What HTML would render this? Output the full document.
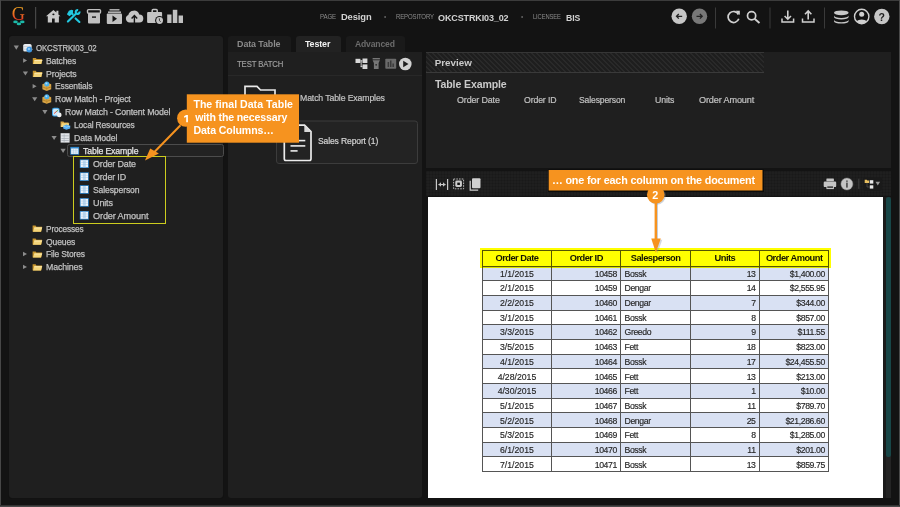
<!DOCTYPE html>
<html><head><meta charset="utf-8">
<style>
*{margin:0;padding:0;box-sizing:border-box}
html,body{width:900px;height:507px;overflow:hidden;background:#131313;font-family:"Liberation Sans",sans-serif}
.a{position:absolute}
.t{position:absolute;white-space:nowrap;line-height:1}
svg{position:absolute;overflow:visible}
</style></head>
<body>
<!-- frame -->
<div class="a" style="left:0;top:0;width:900px;height:1px;background:#3c3c3c"></div>
<div class="a" style="left:0;top:0;width:1px;height:507px;background:#474747"></div>
<div class="a" style="left:899px;top:0;width:1px;height:507px;background:#4a4a4a"></div>
<div class="a" style="left:0;top:505px;width:900px;height:1px;background:#333333"></div>
<div class="a" style="left:0;top:506px;width:900px;height:1px;background:#4a4a4a"></div>

<!-- LEFT PANEL -->
<div class="a" style="left:9px;top:36px;width:214px;height:461.5px;background:#1f1f1f;border-radius:3px;box-shadow:0 0 1px #0a0a0a"></div>

<!-- MIDDLE PANEL -->
<div class="a" style="left:228px;top:36px;width:63px;height:17px;background:#1a1a1a;border-radius:3px 3px 0 0"></div>
<div class="a" style="left:295.5px;top:36px;width:45px;height:17px;background:#222222;border-radius:3px 3px 0 0"></div>
<div class="a" style="left:345.5px;top:36px;width:59px;height:17px;background:#1a1a1a;border-radius:3px 3px 0 0"></div>
<div class="a" style="left:227.5px;top:52px;width:194.5px;height:445.5px;background:#1f1f1f;border-radius:0 0 3px 3px"></div>
<div class="a" style="left:227.5px;top:74.5px;width:194.5px;height:1px;background:#282828"></div>

<!-- PREVIEW top -->
<div class="a" style="left:426px;top:52px;width:465px;height:116px;background:#1f1f1f"></div>
<div class="a" style="left:426px;top:52px;width:338px;height:20px;background:repeating-linear-gradient(45deg,#292929 0 1.4px,#1e1e1e 1.4px 3.5px);border-top:1px solid #363636"></div>
<div class="a" style="left:426px;top:72px;width:338px;height:1px;background:#3a3a3a"></div>

<!-- PREVIEW bottom toolbar -->
<div class="a" style="left:426px;top:171px;width:465px;height:25px;background-color:#1f1f1f;background-image:linear-gradient(90deg,rgba(0,0,0,.09) 1px,transparent 1px),linear-gradient(rgba(0,0,0,.09) 1px,transparent 1px);background-size:3px 3px"></div>
<div class="a" style="left:428px;top:197px;width:455px;height:300.5px;background:#ffffff"></div>
<div class="a" style="left:883px;top:197px;width:8px;height:300.5px;background:#1b1b1b"></div>
<div class="a" style="left:885.6px;top:197px;width:5.2px;height:300.5px;background:#242424"></div>
<div class="a" style="left:885.6px;top:197px;width:5.2px;height:259.5px;background:#184647;border-radius:2.5px 2.5px 2px 2px"></div>

<!-- tree highlight boxes -->
<div class="a" style="left:67.4px;top:144.4px;width:156.6px;height:12.6px;border:1px solid #4c4c4c;border-radius:2.5px;background:#222222"></div>
<div class="a" style="left:73.2px;top:156px;width:92.5px;height:67.8px;border:1.5px solid #cccc1e"></div>

<!-- ICONS -->
<svg class="a" style="left:0;top:0" width="900" height="507" viewBox="0 0 900 507">
 <!-- logo G -->
 <defs>
  <linearGradient id="gG" x1="0" y1="0" x2="0" y2="1"><stop offset="0.15" stop-color="#f4a822"/><stop offset="0.9" stop-color="#e22a22"/></linearGradient>
 </defs>
 <!-- top separator -->
 <text x="11.8" y="19.8" font-family="Liberation Serif" font-size="18.3" fill="url(#gG)">G</text>
 <rect x="35" y="7" width="1.2" height="21.6" fill="#464646"/>
 <!-- logo dots -->
 <g fill="#1cb8a8">
  <ellipse cx="15.5" cy="21.9" rx="2.3" ry="1.3"/><ellipse cx="22.3" cy="21.9" rx="2.3" ry="1.3"/>
  <ellipse cx="18.9" cy="23.9" rx="2.3" ry="1.3"/>
 </g>
 <!-- home -->
 <path fill="#c8c8c8" d="M53.4 9.9 L46 16.3 L47.8 16.3 L47.8 22.6 L52 22.6 L52 18.4 L54.7 18.4 L54.7 22.6 L58.9 22.6 L58.9 16.3 L60.5 16.3 L58.4 14.4 L58.4 10.7 L56.4 10.7 L56.4 12.6 Z"/>
 <ellipse cx="53.4" cy="14.3" rx="1.1" ry="0.9" fill="#131313"/>
 <!-- tools -->
 <g stroke="#22c8e0" stroke-width="2.1" fill="none" stroke-linecap="round">
  <path d="M67.9 21.6 L75.6 13.9"/>
  <path d="M75.6 18.4 L79.4 22"/>
  <path d="M79.44 11.51 A1.9 1.9 0 1 1 78.09 10.17" stroke-linecap="butt"/>
 </g>
 <path fill="#22c8e0" d="M66.9 14.3 L68.9 10.7 L71.3 9.7 L73.2 10.3 L72.9 12.9 L74 14 L72.6 15.4 L71.4 14.4 L69.7 16.3 L68.1 15.3 Z"/>
 <!-- archive -->
 <rect x="87.5" y="9.6" width="13" height="3.6" rx="1" fill="none" stroke="#c0c0c0" stroke-width="1.4"/>
 <rect x="88" y="13.2" width="12" height="10.3" rx="1" fill="#c0c0c0"/>
 <rect x="92" y="16.4" width="4" height="1.4" fill="#131313"/>
 <!-- play box -->
 <rect x="109.5" y="9" width="10" height="1.6" fill="#a8a8a8"/>
 <rect x="108" y="11.4" width="13" height="1.6" fill="#b0b0b0"/>
 <rect x="106.8" y="13.6" width="15.2" height="10.4" rx="1" fill="#c0c0c0"/>
 <path d="M112.5 15.5 L117 18.8 L112.5 22 Z" fill="#131313"/>
 <!-- cloud -->
 <path fill="#c4c4c4" d="M129.6 22.6 A3.9 3.9 0 0 1 128.3 15.1 A5.7 5.7 0 0 1 139.3 14.6 A4 4 0 0 1 139.3 22.6 Z"/>
 <path d="M134.4 23.5 L134.4 15.8 M131.6 18.5 L134.4 15.6 L137.2 18.5" stroke="#131313" stroke-width="1.4" fill="none"/>
 <!-- briefcase -->
 <path fill="none" stroke="#c4c4c4" stroke-width="1.5" d="M152.2 12.2 L152.2 10.6 Q152.2 9.6 153.2 9.6 L156.2 9.6 Q157.2 9.6 157.2 10.6 L157.2 12.2"/>
 <rect x="147.1" y="12.1" width="15" height="10.9" rx="1" fill="#c4c4c4"/>
 <circle cx="159.6" cy="20.5" r="4.5" fill="#131313"/>
 <circle cx="159.6" cy="20.5" r="3.4" fill="#c4c4c4"/>
 <path d="M159.3 18.4 L159.5 20.6 L160.6 21.8" stroke="#131313" stroke-width="0.8" fill="none"/>
 <!-- bars -->
 <rect x="167.2" y="14.5" width="4.3" height="8.5" fill="#c0c0c0"/>
 <rect x="172.8" y="9.8" width="4.5" height="13.2" fill="#c0c0c0"/>
 <rect x="178.6" y="15.5" width="4.4" height="7.5" fill="#c0c0c0"/>

 <!-- center dots -->
 <circle cx="385.1" cy="17" r="0.8" fill="#9a9a9a"/>
 <circle cx="522.1" cy="17" r="0.8" fill="#9a9a9a"/>

 <!-- right icons -->
 <circle cx="679.2" cy="16.3" r="7.7" fill="#c6c6c6"/>
 <path d="M682.2 16.3 L676.5 16.3 M678.8 14 L676.5 16.3 L678.8 18.6" stroke="#222" stroke-width="1.3" fill="none"/>
 <circle cx="699.5" cy="16.3" r="7.7" fill="#787878"/>
 <path d="M696.5 16.3 L702.2 16.3 M699.9 14 L702.2 16.3 L699.9 18.6" stroke="#222" stroke-width="1.3" fill="none"/>
 <rect x="715" y="7.5" width="1" height="21" fill="#3a3a3a"/>
 <path d="M738.5 14.5 A5.5 5.5 0 1 0 738.8 18.8" stroke="#d0d0d0" stroke-width="1.7" fill="none"/>
 <path d="M735.5 10.8 L739.8 10.8 L739.8 15 Z" fill="#d0d0d0"/>
 <circle cx="751.6" cy="15.8" r="4.1" stroke="#d0d0d0" stroke-width="1.7" fill="none"/>
 <path d="M754.6 18.8 L759.5 23" stroke="#d0d0d0" stroke-width="1.9"/>
 <rect x="769.5" y="7.5" width="1" height="21" fill="#3a3a3a"/>
 <path d="M782 18.5 L782 22 L793.6 22 L793.6 18.5" stroke="#d0d0d0" stroke-width="1.5" fill="none"/>
 <path d="M787.8 10.5 L787.8 19 M784.6 16 L787.8 19.2 L791 16" stroke="#d0d0d0" stroke-width="1.6" fill="none"/>
 <path d="M802.5 18.5 L802.5 22 L814 22 L814 18.5" stroke="#d0d0d0" stroke-width="1.5" fill="none"/>
 <path d="M808.2 19.5 L808.2 11 M805 14.2 L808.2 11 L811.4 14.2" stroke="#d0d0d0" stroke-width="1.6" fill="none"/>
 <rect x="824" y="7.5" width="1" height="21" fill="#3a3a3a"/>
 <ellipse cx="841.3" cy="12.8" rx="7.3" ry="2.4" fill="#c8c8c8"/>
 <path d="M834 15.5 A7.3 2.4 0 0 0 848.6 15.5 L848.6 17 A7.3 2.4 0 0 1 834 17 Z" fill="#c8c8c8"/>
 <path d="M834 19.8 A7.3 2.4 0 0 0 848.6 19.8 L848.6 21.2 A7.3 2.4 0 0 1 834 21.2 Z" fill="#c8c8c8"/>
 <circle cx="861.7" cy="16.5" r="7.2" fill="none" stroke="#d0d0d0" stroke-width="1.4"/>
 <circle cx="861.7" cy="14.2" r="2.5" fill="#d0d0d0"/>
 <path d="M856.4 21.3 A6.5 4.5 0 0 1 867 21.3 A7 7 0 0 1 856.4 21.3Z" fill="#d0d0d0"/>
 <circle cx="881.8" cy="16.5" r="7.7" fill="#c6c6c6"/>

<path d="M13.70 45.60 L18.90 45.60 L16.30 49.70 Z" fill="#8c8c8c"/>
<g transform="translate(22.80 43.40)"><rect x="0.4" y="0.6" width="8.4" height="7.6" rx="1.6" fill="#e8ecf0"/><path d="M0.4 3.2 L8.8 3.2 M0.4 5.8 L8.8 5.8" stroke="#b8bec6" stroke-width="0.6"/><circle cx="6.5" cy="6.2" r="2.9" fill="#3c96e0"/><circle cx="6.1" cy="5.6" r="1.2" fill="#8cc8f8"/><path d="M8.9 4.8 L10 5.8 L8.9 6.8" fill="#a0a0a0"/></g>
<path d="M23.10 58.30 L27.10 60.50 L23.10 62.70 Z" fill="#8c8c8c"/>
<g transform="translate(32.80 56.90)"><path d="M0 1 L0 7.2 L8.6 7.2 L9.4 2.2 L3.8 2.2 L3 1 Z" fill="#c8962e"/><path d="M0.4 7.2 L1.8 3 L9.6 3 L8.4 7.2 Z" fill="#f4d57a"/><path d="M1.8 3 L9.6 3 L9.3 4 L1.5 4 Z" fill="#fbe9b0"/></g>
<path d="M22.80 71.40 L28.00 71.40 L25.40 75.50 Z" fill="#8c8c8c"/>
<g transform="translate(32.80 69.80)"><path d="M0 1 L0 7.2 L8.6 7.2 L9.4 2.2 L3.8 2.2 L3 1 Z" fill="#c8962e"/><path d="M0.4 7.2 L1.8 3 L9.6 3 L8.4 7.2 Z" fill="#f4d57a"/><path d="M1.8 3 L9.6 3 L9.3 4 L1.5 4 Z" fill="#fbe9b0"/></g>
<path d="M32.60 84.10 L36.60 86.30 L32.60 88.50 Z" fill="#8c8c8c"/>
<g transform="translate(42.20 81.30)"><path d="M0.2 3 L4.5 1.2 L9 3 L9 8 L4.5 9.6 L0.2 8 Z" fill="#d9a547"/><path d="M0.2 5.6 L4.5 7.2 L9 5.6" fill="none" stroke="#a8781e" stroke-width="0.7"/><path d="M4.5 4.6 L4.5 9.6" stroke="#b88628" stroke-width="0.6"/><circle cx="4.6" cy="2.6" r="2.5" fill="#4ab0ea"/><circle cx="4.2" cy="2.1" r="1" fill="#a8dcff"/></g>
<path d="M32.10 97.20 L37.30 97.20 L34.70 101.30 Z" fill="#8c8c8c"/>
<g transform="translate(42.20 94.20)"><path d="M0.2 3 L4.5 1.2 L9 3 L9 8 L4.5 9.6 L0.2 8 Z" fill="#d9a547"/><path d="M0.2 5.6 L4.5 7.2 L9 5.6" fill="none" stroke="#a8781e" stroke-width="0.7"/><path d="M4.5 4.6 L4.5 9.6" stroke="#b88628" stroke-width="0.6"/><circle cx="4.6" cy="2.6" r="2.5" fill="#4ab0ea"/><circle cx="4.2" cy="2.1" r="1" fill="#a8dcff"/></g>
<path d="M42.30 110.10 L47.50 110.10 L44.90 114.20 Z" fill="#8c8c8c"/>
<g transform="translate(51.70 107.50)"><rect x="0.3" y="0.3" width="7.6" height="8.6" rx="2" fill="#3aa0e4"/><rect x="1.2" y="1.2" width="6" height="6.8" rx="1.5" fill="#cfe8fa"/><path d="M2.4 6 L5.2 3.6" stroke="#e04a3a" stroke-width="1"/><path d="M5 3.8 L6.4 2.8" stroke="#4ab04a" stroke-width="1"/><circle cx="7.6" cy="7.4" r="2.3" fill="#f0f0f0"/></g>
<g transform="translate(60.60 120.40)"><path d="M0 1 L0 6.6 L8 6.6 L8 2 L3.6 2 L2.8 1 Z" fill="#d8a848"/><path d="M0.3 6.6 L1.4 2.8 L8.6 2.8 L7.8 6.6 Z" fill="#f4d57a"/><path d="M5.8 4.2 L9.6 5.6 L9.6 8.2 L5.8 9.4 L2.6 8.2 L2.6 5.6 Z" fill="#56aff0"/><path d="M2.6 5.6 L5.8 6.8 L9.6 5.6" fill="none" stroke="#a8d8fa" stroke-width="0.7"/></g>
<path d="M51.50 135.90 L56.70 135.90 L54.10 140.00 Z" fill="#8c8c8c"/>
<g transform="translate(60.60 133.20)"><rect x="0" y="0" width="9" height="9.4" fill="#e2e4e8"/><rect x="0.8" y="2.4" width="7.4" height="0.6" fill="#9aa0a8"/><rect x="0.8" y="4.8" width="7.4" height="0.6" fill="#9aa0a8"/><rect x="0.8" y="7.2" width="7.4" height="0.6" fill="#9aa0a8"/><rect x="3.2" y="1" width="0.6" height="7.8" fill="#a8aeb6"/></g>
<path d="M60.50 148.80 L65.70 148.80 L63.10 152.90 Z" fill="#8c8c8c"/>
<g transform="translate(70.30 146.90)"><rect x="0" y="0" width="8.8" height="7.8" fill="#2e86cc"/><rect x="0.8" y="1.6" width="7.2" height="5.4" fill="#eef4fa"/><path d="M0.8 3.4 H8 M0.8 5.2 H8 M3.2 1.6 V7 M5.6 1.6 V7" stroke="#9cc4e4" stroke-width="0.5"/></g>
<g transform="translate(79.80 159.40)"><rect x="0" y="0" width="9" height="8.6" fill="#2e86cc"/><rect x="0.8" y="0.8" width="7.4" height="7" fill="#f2f6fa"/><rect x="3" y="0.8" width="3" height="7" fill="#bcd8f0"/><path d="M0.8 3 H8.2 M0.8 5.2 H8.2" stroke="#9cc4e4" stroke-width="0.5"/></g>
<g transform="translate(79.80 172.30)"><rect x="0" y="0" width="9" height="8.6" fill="#2e86cc"/><rect x="0.8" y="0.8" width="7.4" height="7" fill="#f2f6fa"/><rect x="3" y="0.8" width="3" height="7" fill="#bcd8f0"/><path d="M0.8 3 H8.2 M0.8 5.2 H8.2" stroke="#9cc4e4" stroke-width="0.5"/></g>
<g transform="translate(79.80 185.20)"><rect x="0" y="0" width="9" height="8.6" fill="#2e86cc"/><rect x="0.8" y="0.8" width="7.4" height="7" fill="#f2f6fa"/><rect x="3" y="0.8" width="3" height="7" fill="#bcd8f0"/><path d="M0.8 3 H8.2 M0.8 5.2 H8.2" stroke="#9cc4e4" stroke-width="0.5"/></g>
<g transform="translate(79.80 198.10)"><rect x="0" y="0" width="9" height="8.6" fill="#2e86cc"/><rect x="0.8" y="0.8" width="7.4" height="7" fill="#f2f6fa"/><rect x="3" y="0.8" width="3" height="7" fill="#bcd8f0"/><path d="M0.8 3 H8.2 M0.8 5.2 H8.2" stroke="#9cc4e4" stroke-width="0.5"/></g>
<g transform="translate(79.80 211.00)"><rect x="0" y="0" width="9" height="8.6" fill="#2e86cc"/><rect x="0.8" y="0.8" width="7.4" height="7" fill="#f2f6fa"/><rect x="3" y="0.8" width="3" height="7" fill="#bcd8f0"/><path d="M0.8 3 H8.2 M0.8 5.2 H8.2" stroke="#9cc4e4" stroke-width="0.5"/></g>
<g transform="translate(32.60 224.60)"><path d="M0 1 L0 7.2 L8.6 7.2 L9.4 2.2 L3.8 2.2 L3 1 Z" fill="#c8962e"/><path d="M0.4 7.2 L1.8 3 L9.6 3 L8.4 7.2 Z" fill="#f4d57a"/><path d="M1.8 3 L9.6 3 L9.3 4 L1.5 4 Z" fill="#fbe9b0"/></g>
<g transform="translate(32.60 237.50)"><path d="M0 1 L0 7.2 L8.6 7.2 L9.4 2.2 L3.8 2.2 L3 1 Z" fill="#c8962e"/><path d="M0.4 7.2 L1.8 3 L9.6 3 L8.4 7.2 Z" fill="#f4d57a"/><path d="M1.8 3 L9.6 3 L9.3 4 L1.5 4 Z" fill="#fbe9b0"/></g>
<g transform="translate(32.60 250.40)"><path d="M0 1 L0 7.2 L8.6 7.2 L9.4 2.2 L3.8 2.2 L3 1 Z" fill="#c8962e"/><path d="M0.4 7.2 L1.8 3 L9.6 3 L8.4 7.2 Z" fill="#f4d57a"/><path d="M1.8 3 L9.6 3 L9.3 4 L1.5 4 Z" fill="#fbe9b0"/></g>
<g transform="translate(32.60 263.30)"><path d="M0 1 L0 7.2 L8.6 7.2 L9.4 2.2 L3.8 2.2 L3 1 Z" fill="#c8962e"/><path d="M0.4 7.2 L1.8 3 L9.6 3 L8.4 7.2 Z" fill="#f4d57a"/><path d="M1.8 3 L9.6 3 L9.3 4 L1.5 4 Z" fill="#fbe9b0"/></g>
<path d="M23.00 251.80 L27.00 254.00 L23.00 256.20 Z" fill="#8c8c8c"/>
<path d="M23.00 264.70 L27.00 266.90 L23.00 269.10 Z" fill="#8c8c8c"/>

 <!-- middle toolbar icons -->
 <g fill="#d8d8d8">
  <rect x="355.5" y="58.8" width="4.9" height="4.2"/>
  <rect x="362.5" y="58.5" width="4.9" height="4.5"/>
  <rect x="362.5" y="64.4" width="4.9" height="4.6"/>
  <rect x="360.4" y="60.4" width="2.1" height="0.9"/>
  <rect x="360.7" y="60.4" width="0.9" height="6.7"/>
  <rect x="360.7" y="66.2" width="1.8" height="0.9"/>
 </g>
 <g fill="#777">
  <rect x="372.6" y="58" width="7.3" height="1.4"/>
  <path d="M372.6 60.2 L379.9 60.2 L378.6 63 L378.6 69 L373.9 69 L373.9 63 Z"/>
 </g>
 <rect x="375.4" y="64" width="1.6" height="1.6" fill="#333"/>
 <rect x="385.3" y="58.7" width="10.9" height="10.1" rx="0.8" fill="#6a6a6a"/>
 <g fill="#3a3a3a"><rect x="387.6" y="62" width="1.5" height="5"/><rect x="390" y="60.5" width="1.5" height="6.5"/><rect x="392.4" y="63.5" width="1.5" height="3.5"/></g>
 <circle cx="405.3" cy="64" r="6.3" fill="#d2d2d2"/>
 <path d="M403.2 60.8 L408.5 64 L403.2 67.2 Z" fill="#1f1f1f"/>

 <!-- folder outline icon -->
 <path d="M245 110 L245 86.3 L257 86.3 L260.5 90 L275 90 L275 110" fill="none" stroke="#e8e8e8" stroke-width="1.7"/>

 <!-- card -->
 <rect x="276.5" y="121" width="141" height="42.5" rx="2.5" fill="#232323" stroke="#3c3c3c" stroke-width="1"/>
 <path d="M284.3 125.2 L304.5 125.2 L311 131.7 L311 158.8 Q311 160.5 309.3 160.5 L286 160.5 Q284.3 160.5 284.3 158.8 Z" fill="none" stroke="#ececec" stroke-width="1.7"/>
 <path d="M304.3 125.2 L311 131.9 L304.3 131.9 Z" fill="#d8d8d8"/>
 <g stroke="#ececec" stroke-width="1.6"><path d="M290.5 140.6 L305.3 140.6"/><path d="M290.5 145.9 L305.3 145.9"/><path d="M290.5 150.9 L297.6 150.9"/></g>

 <!-- preview toolbar icons -->
 <g fill="#c8c8c8">
  <rect x="435.8" y="179" width="1.2" height="11"/>
  <rect x="447" y="179" width="1.2" height="11"/>
  <rect x="438.5" y="184" width="7" height="1.1"/>
  <path d="M438.5 184.55 L441 182.3 L441 186.8 Z"/>
  <path d="M445.5 184.55 L443 182.3 L443 186.8 Z"/>
 </g>
 <rect x="453.6" y="179" width="10" height="9.8" fill="none" stroke="#b8b8b8" stroke-width="1" stroke-dasharray="1.6 1.1"/>
 <rect x="455.3" y="180.6" width="6.6" height="6.4" rx="1.4" fill="#cccccc"/>
 <rect x="457.3" y="182.6" width="2.6" height="2.4" fill="#111"/>
 <rect x="472" y="178.3" width="8.5" height="10" rx="1" fill="#cfcfcf"/>
 <path d="M470.2 180.8 L470.2 190.2 L478.2 190.2" fill="none" stroke="#cfcfcf" stroke-width="1.2"/>
 <!-- print -->
 <g fill="#c4c4c4">
  <rect x="826.4" y="178.6" width="7.5" height="2.6" rx="0.5"/>
  <rect x="823.7" y="181.5" width="12.5" height="5.6" rx="1.2"/>
  <rect x="826.4" y="186" width="7.5" height="3.1"/>
 </g>
 <rect x="827.3" y="186.4" width="5.7" height="1.4" fill="#2a2a2a"/>
 <circle cx="846.9" cy="184" r="6" fill="#c4c4c4" stroke="#8a8a8a" stroke-width="0.5"/>
 <rect x="846.3" y="182.6" width="1.3" height="5" fill="#2a2a2a"/>
 <rect x="846.3" y="180.5" width="1.3" height="1.3" fill="#2a2a2a"/>
 <rect x="858.4" y="178.7" width="0.9" height="10.2" fill="#444"/>
 <rect x="863" y="177.2" width="19" height="13.6" rx="2" fill="#1a1a1a"/>
 <path d="M864.7 179.7 L866.8 179.7 L867.4 180.4 L869.1 180.4 L869.1 182.9 L864.7 182.9 Z" fill="#e8c060"/>
 <rect x="869.8" y="180.2" width="3.5" height="3.4" fill="#eaeaea"/>
 <rect x="869.8" y="185.3" width="3.5" height="3.3" fill="#eaeaea"/>
 <path d="M867 183 L867 187 L869.8 187" stroke="#5a5a5a" stroke-width="0.6" fill="none"/>
 <path d="M875.5 181.8 L880.1 181.8 L877.8 185.4 Z" fill="#9a9a9a"/>

<!--TABLESVG-->

 <!-- callout arrows -->
 <g z-index="5">
 </g>
</svg>

<div class="a" style="left:482.3px;top:250.6px;width:346.6px;height:15.4px;background:#ffffff"></div>
<div class="a" style="left:482.30px;top:266.00px;width:346.60px;height:14.69px;background:#d9e1f3"></div>
<div class="a" style="left:482.30px;top:280.69px;width:346.60px;height:14.69px;background:#ffffff"></div>
<div class="a" style="left:482.30px;top:295.37px;width:346.60px;height:14.69px;background:#d9e1f3"></div>
<div class="a" style="left:482.30px;top:310.06px;width:346.60px;height:14.69px;background:#ffffff"></div>
<div class="a" style="left:482.30px;top:324.74px;width:346.60px;height:14.69px;background:#d9e1f3"></div>
<div class="a" style="left:482.30px;top:339.43px;width:346.60px;height:14.69px;background:#ffffff"></div>
<div class="a" style="left:482.30px;top:354.12px;width:346.60px;height:14.69px;background:#d9e1f3"></div>
<div class="a" style="left:482.30px;top:368.80px;width:346.60px;height:14.69px;background:#ffffff"></div>
<div class="a" style="left:482.30px;top:383.49px;width:346.60px;height:14.69px;background:#d9e1f3"></div>
<div class="a" style="left:482.30px;top:398.17px;width:346.60px;height:14.69px;background:#ffffff"></div>
<div class="a" style="left:482.30px;top:412.86px;width:346.60px;height:14.69px;background:#d9e1f3"></div>
<div class="a" style="left:482.30px;top:427.55px;width:346.60px;height:14.69px;background:#ffffff"></div>
<div class="a" style="left:482.30px;top:442.23px;width:346.60px;height:14.69px;background:#d9e1f3"></div>
<div class="a" style="left:482.30px;top:456.92px;width:346.60px;height:14.69px;background:#ffffff"></div>
<div class="a" style="left:481.80px;top:250.10px;width:1px;height:222.00px;background:#555555"></div>
<div class="a" style="left:551.12px;top:250.10px;width:1px;height:222.00px;background:#555555"></div>
<div class="a" style="left:620.44px;top:250.10px;width:1px;height:222.00px;background:#555555"></div>
<div class="a" style="left:689.76px;top:250.10px;width:1px;height:222.00px;background:#555555"></div>
<div class="a" style="left:759.08px;top:250.10px;width:1px;height:222.00px;background:#555555"></div>
<div class="a" style="left:828.40px;top:250.10px;width:1px;height:222.00px;background:#555555"></div>
<div class="a" style="left:481.80px;top:250.10px;width:347.60px;height:1px;background:#555555"></div>
<div class="a" style="left:481.80px;top:265.50px;width:347.60px;height:1px;background:#555555"></div>
<div class="a" style="left:481.80px;top:280.19px;width:347.60px;height:1px;background:#555555"></div>
<div class="a" style="left:481.80px;top:294.87px;width:347.60px;height:1px;background:#555555"></div>
<div class="a" style="left:481.80px;top:309.56px;width:347.60px;height:1px;background:#555555"></div>
<div class="a" style="left:481.80px;top:324.24px;width:347.60px;height:1px;background:#555555"></div>
<div class="a" style="left:481.80px;top:338.93px;width:347.60px;height:1px;background:#555555"></div>
<div class="a" style="left:481.80px;top:353.62px;width:347.60px;height:1px;background:#555555"></div>
<div class="a" style="left:481.80px;top:368.30px;width:347.60px;height:1px;background:#555555"></div>
<div class="a" style="left:481.80px;top:382.99px;width:347.60px;height:1px;background:#555555"></div>
<div class="a" style="left:481.80px;top:397.67px;width:347.60px;height:1px;background:#555555"></div>
<div class="a" style="left:481.80px;top:412.36px;width:347.60px;height:1px;background:#555555"></div>
<div class="a" style="left:481.80px;top:427.05px;width:347.60px;height:1px;background:#555555"></div>
<div class="a" style="left:481.80px;top:441.73px;width:347.60px;height:1px;background:#555555"></div>
<div class="a" style="left:481.80px;top:456.42px;width:347.60px;height:1px;background:#555555"></div>
<div class="a" style="left:481.80px;top:471.10px;width:347.60px;height:1px;background:#555555"></div>
<div class="t tc" style="left:482.30px;width:69.32px;top:254.49px;font-size:9.30px;font-weight:bold;color:#141414;text-align:center;letter-spacing:-0.5px">Order Date</div>
<div class="t tc" style="left:551.62px;width:69.32px;top:254.49px;font-size:9.30px;font-weight:bold;color:#141414;text-align:center;letter-spacing:-0.5px">Order ID</div>
<div class="t tc" style="left:620.94px;width:69.32px;top:254.49px;font-size:9.30px;font-weight:bold;color:#141414;text-align:center;letter-spacing:-0.5px">Salesperson</div>
<div class="t tc" style="left:690.26px;width:69.32px;top:254.49px;font-size:9.30px;font-weight:bold;color:#141414;text-align:center;letter-spacing:-0.5px">Units</div>
<div class="t tc" style="left:759.58px;width:69.32px;top:254.49px;font-size:9.30px;font-weight:bold;color:#141414;text-align:center;letter-spacing:-0.5px">Order Amount</div>
<div class="t" style="left:482.30px;width:69.32px;text-align:center;top:269.71px;font-size:8.70px;color:#262626;letter-spacing:0.00px;-webkit-text-stroke:0.15px #262626">1/1/2015</div>
<div class="t" style="left:551.62px;width:65.32px;text-align:right;top:269.71px;font-size:8.70px;color:#262626;letter-spacing:-0.40px;-webkit-text-stroke:0.15px #262626">10458</div>
<div class="t" style="left:624.54px;top:269.71px;font-size:8.70px;color:#262626;letter-spacing:-0.40px;-webkit-text-stroke:0.15px #262626">Bossk</div>
<div class="t" style="left:690.26px;width:65.32px;text-align:right;top:269.71px;font-size:8.70px;color:#262626;letter-spacing:-0.40px;-webkit-text-stroke:0.15px #262626">13</div>
<div class="t" style="left:759.58px;width:65.32px;text-align:right;top:269.71px;font-size:8.70px;color:#262626;letter-spacing:-0.40px;-webkit-text-stroke:0.15px #262626">$1,400.00</div>
<div class="t" style="left:482.30px;width:69.32px;text-align:center;top:284.39px;font-size:8.70px;color:#262626;letter-spacing:0.00px;-webkit-text-stroke:0.15px #262626">2/1/2015</div>
<div class="t" style="left:551.62px;width:65.32px;text-align:right;top:284.39px;font-size:8.70px;color:#262626;letter-spacing:-0.40px;-webkit-text-stroke:0.15px #262626">10459</div>
<div class="t" style="left:624.54px;top:284.39px;font-size:8.70px;color:#262626;letter-spacing:-0.40px;-webkit-text-stroke:0.15px #262626">Dengar</div>
<div class="t" style="left:690.26px;width:65.32px;text-align:right;top:284.39px;font-size:8.70px;color:#262626;letter-spacing:-0.40px;-webkit-text-stroke:0.15px #262626">14</div>
<div class="t" style="left:759.58px;width:65.32px;text-align:right;top:284.39px;font-size:8.70px;color:#262626;letter-spacing:-0.40px;-webkit-text-stroke:0.15px #262626">$2,555.95</div>
<div class="t" style="left:482.30px;width:69.32px;text-align:center;top:299.08px;font-size:8.70px;color:#262626;letter-spacing:0.00px;-webkit-text-stroke:0.15px #262626">2/2/2015</div>
<div class="t" style="left:551.62px;width:65.32px;text-align:right;top:299.08px;font-size:8.70px;color:#262626;letter-spacing:-0.40px;-webkit-text-stroke:0.15px #262626">10460</div>
<div class="t" style="left:624.54px;top:299.08px;font-size:8.70px;color:#262626;letter-spacing:-0.40px;-webkit-text-stroke:0.15px #262626">Dengar</div>
<div class="t" style="left:690.26px;width:65.32px;text-align:right;top:299.08px;font-size:8.70px;color:#262626;letter-spacing:-0.40px;-webkit-text-stroke:0.15px #262626">7</div>
<div class="t" style="left:759.58px;width:65.32px;text-align:right;top:299.08px;font-size:8.70px;color:#262626;letter-spacing:-0.40px;-webkit-text-stroke:0.15px #262626">$344.00</div>
<div class="t" style="left:482.30px;width:69.32px;text-align:center;top:313.76px;font-size:8.70px;color:#262626;letter-spacing:0.00px;-webkit-text-stroke:0.15px #262626">3/1/2015</div>
<div class="t" style="left:551.62px;width:65.32px;text-align:right;top:313.76px;font-size:8.70px;color:#262626;letter-spacing:-0.40px;-webkit-text-stroke:0.15px #262626">10461</div>
<div class="t" style="left:624.54px;top:313.76px;font-size:8.70px;color:#262626;letter-spacing:-0.40px;-webkit-text-stroke:0.15px #262626">Bossk</div>
<div class="t" style="left:690.26px;width:65.32px;text-align:right;top:313.76px;font-size:8.70px;color:#262626;letter-spacing:-0.40px;-webkit-text-stroke:0.15px #262626">8</div>
<div class="t" style="left:759.58px;width:65.32px;text-align:right;top:313.76px;font-size:8.70px;color:#262626;letter-spacing:-0.40px;-webkit-text-stroke:0.15px #262626">$857.00</div>
<div class="t" style="left:482.30px;width:69.32px;text-align:center;top:328.45px;font-size:8.70px;color:#262626;letter-spacing:0.00px;-webkit-text-stroke:0.15px #262626">3/3/2015</div>
<div class="t" style="left:551.62px;width:65.32px;text-align:right;top:328.45px;font-size:8.70px;color:#262626;letter-spacing:-0.40px;-webkit-text-stroke:0.15px #262626">10462</div>
<div class="t" style="left:624.54px;top:328.45px;font-size:8.70px;color:#262626;letter-spacing:-0.40px;-webkit-text-stroke:0.15px #262626">Greedo</div>
<div class="t" style="left:690.26px;width:65.32px;text-align:right;top:328.45px;font-size:8.70px;color:#262626;letter-spacing:-0.40px;-webkit-text-stroke:0.15px #262626">9</div>
<div class="t" style="left:759.58px;width:65.32px;text-align:right;top:328.45px;font-size:8.70px;color:#262626;letter-spacing:-0.40px;-webkit-text-stroke:0.15px #262626">$111.55</div>
<div class="t" style="left:482.30px;width:69.32px;text-align:center;top:343.14px;font-size:8.70px;color:#262626;letter-spacing:0.00px;-webkit-text-stroke:0.15px #262626">3/5/2015</div>
<div class="t" style="left:551.62px;width:65.32px;text-align:right;top:343.14px;font-size:8.70px;color:#262626;letter-spacing:-0.40px;-webkit-text-stroke:0.15px #262626">10463</div>
<div class="t" style="left:624.54px;top:343.14px;font-size:8.70px;color:#262626;letter-spacing:-0.40px;-webkit-text-stroke:0.15px #262626">Fett</div>
<div class="t" style="left:690.26px;width:65.32px;text-align:right;top:343.14px;font-size:8.70px;color:#262626;letter-spacing:-0.40px;-webkit-text-stroke:0.15px #262626">18</div>
<div class="t" style="left:759.58px;width:65.32px;text-align:right;top:343.14px;font-size:8.70px;color:#262626;letter-spacing:-0.40px;-webkit-text-stroke:0.15px #262626">$823.00</div>
<div class="t" style="left:482.30px;width:69.32px;text-align:center;top:357.82px;font-size:8.70px;color:#262626;letter-spacing:0.00px;-webkit-text-stroke:0.15px #262626">4/1/2015</div>
<div class="t" style="left:551.62px;width:65.32px;text-align:right;top:357.82px;font-size:8.70px;color:#262626;letter-spacing:-0.40px;-webkit-text-stroke:0.15px #262626">10464</div>
<div class="t" style="left:624.54px;top:357.82px;font-size:8.70px;color:#262626;letter-spacing:-0.40px;-webkit-text-stroke:0.15px #262626">Bossk</div>
<div class="t" style="left:690.26px;width:65.32px;text-align:right;top:357.82px;font-size:8.70px;color:#262626;letter-spacing:-0.40px;-webkit-text-stroke:0.15px #262626">17</div>
<div class="t" style="left:759.58px;width:65.32px;text-align:right;top:357.82px;font-size:8.70px;color:#262626;letter-spacing:-0.40px;-webkit-text-stroke:0.15px #262626">$24,455.50</div>
<div class="t" style="left:482.30px;width:69.32px;text-align:center;top:372.51px;font-size:8.70px;color:#262626;letter-spacing:0.00px;-webkit-text-stroke:0.15px #262626">4/28/2015</div>
<div class="t" style="left:551.62px;width:65.32px;text-align:right;top:372.51px;font-size:8.70px;color:#262626;letter-spacing:-0.40px;-webkit-text-stroke:0.15px #262626">10465</div>
<div class="t" style="left:624.54px;top:372.51px;font-size:8.70px;color:#262626;letter-spacing:-0.40px;-webkit-text-stroke:0.15px #262626">Fett</div>
<div class="t" style="left:690.26px;width:65.32px;text-align:right;top:372.51px;font-size:8.70px;color:#262626;letter-spacing:-0.40px;-webkit-text-stroke:0.15px #262626">13</div>
<div class="t" style="left:759.58px;width:65.32px;text-align:right;top:372.51px;font-size:8.70px;color:#262626;letter-spacing:-0.40px;-webkit-text-stroke:0.15px #262626">$213.00</div>
<div class="t" style="left:482.30px;width:69.32px;text-align:center;top:387.19px;font-size:8.70px;color:#262626;letter-spacing:0.00px;-webkit-text-stroke:0.15px #262626">4/30/2015</div>
<div class="t" style="left:551.62px;width:65.32px;text-align:right;top:387.19px;font-size:8.70px;color:#262626;letter-spacing:-0.40px;-webkit-text-stroke:0.15px #262626">10466</div>
<div class="t" style="left:624.54px;top:387.19px;font-size:8.70px;color:#262626;letter-spacing:-0.40px;-webkit-text-stroke:0.15px #262626">Fett</div>
<div class="t" style="left:690.26px;width:65.32px;text-align:right;top:387.19px;font-size:8.70px;color:#262626;letter-spacing:-0.40px;-webkit-text-stroke:0.15px #262626">1</div>
<div class="t" style="left:759.58px;width:65.32px;text-align:right;top:387.19px;font-size:8.70px;color:#262626;letter-spacing:-0.40px;-webkit-text-stroke:0.15px #262626">$10.00</div>
<div class="t" style="left:482.30px;width:69.32px;text-align:center;top:401.88px;font-size:8.70px;color:#262626;letter-spacing:0.00px;-webkit-text-stroke:0.15px #262626">5/1/2015</div>
<div class="t" style="left:551.62px;width:65.32px;text-align:right;top:401.88px;font-size:8.70px;color:#262626;letter-spacing:-0.40px;-webkit-text-stroke:0.15px #262626">10467</div>
<div class="t" style="left:624.54px;top:401.88px;font-size:8.70px;color:#262626;letter-spacing:-0.40px;-webkit-text-stroke:0.15px #262626">Bossk</div>
<div class="t" style="left:690.26px;width:65.32px;text-align:right;top:401.88px;font-size:8.70px;color:#262626;letter-spacing:-0.40px;-webkit-text-stroke:0.15px #262626">11</div>
<div class="t" style="left:759.58px;width:65.32px;text-align:right;top:401.88px;font-size:8.70px;color:#262626;letter-spacing:-0.40px;-webkit-text-stroke:0.15px #262626">$789.70</div>
<div class="t" style="left:482.30px;width:69.32px;text-align:center;top:416.57px;font-size:8.70px;color:#262626;letter-spacing:0.00px;-webkit-text-stroke:0.15px #262626">5/2/2015</div>
<div class="t" style="left:551.62px;width:65.32px;text-align:right;top:416.57px;font-size:8.70px;color:#262626;letter-spacing:-0.40px;-webkit-text-stroke:0.15px #262626">10468</div>
<div class="t" style="left:624.54px;top:416.57px;font-size:8.70px;color:#262626;letter-spacing:-0.40px;-webkit-text-stroke:0.15px #262626">Dengar</div>
<div class="t" style="left:690.26px;width:65.32px;text-align:right;top:416.57px;font-size:8.70px;color:#262626;letter-spacing:-0.40px;-webkit-text-stroke:0.15px #262626">25</div>
<div class="t" style="left:759.58px;width:65.32px;text-align:right;top:416.57px;font-size:8.70px;color:#262626;letter-spacing:-0.40px;-webkit-text-stroke:0.15px #262626">$21,286.60</div>
<div class="t" style="left:482.30px;width:69.32px;text-align:center;top:431.25px;font-size:8.70px;color:#262626;letter-spacing:0.00px;-webkit-text-stroke:0.15px #262626">5/3/2015</div>
<div class="t" style="left:551.62px;width:65.32px;text-align:right;top:431.25px;font-size:8.70px;color:#262626;letter-spacing:-0.40px;-webkit-text-stroke:0.15px #262626">10469</div>
<div class="t" style="left:624.54px;top:431.25px;font-size:8.70px;color:#262626;letter-spacing:-0.40px;-webkit-text-stroke:0.15px #262626">Fett</div>
<div class="t" style="left:690.26px;width:65.32px;text-align:right;top:431.25px;font-size:8.70px;color:#262626;letter-spacing:-0.40px;-webkit-text-stroke:0.15px #262626">8</div>
<div class="t" style="left:759.58px;width:65.32px;text-align:right;top:431.25px;font-size:8.70px;color:#262626;letter-spacing:-0.40px;-webkit-text-stroke:0.15px #262626">$1,285.00</div>
<div class="t" style="left:482.30px;width:69.32px;text-align:center;top:445.94px;font-size:8.70px;color:#262626;letter-spacing:0.00px;-webkit-text-stroke:0.15px #262626">6/1/2015</div>
<div class="t" style="left:551.62px;width:65.32px;text-align:right;top:445.94px;font-size:8.70px;color:#262626;letter-spacing:-0.40px;-webkit-text-stroke:0.15px #262626">10470</div>
<div class="t" style="left:624.54px;top:445.94px;font-size:8.70px;color:#262626;letter-spacing:-0.40px;-webkit-text-stroke:0.15px #262626">Bossk</div>
<div class="t" style="left:690.26px;width:65.32px;text-align:right;top:445.94px;font-size:8.70px;color:#262626;letter-spacing:-0.40px;-webkit-text-stroke:0.15px #262626">11</div>
<div class="t" style="left:759.58px;width:65.32px;text-align:right;top:445.94px;font-size:8.70px;color:#262626;letter-spacing:-0.40px;-webkit-text-stroke:0.15px #262626">$201.00</div>
<div class="t" style="left:482.30px;width:69.32px;text-align:center;top:460.62px;font-size:8.70px;color:#262626;letter-spacing:0.00px;-webkit-text-stroke:0.15px #262626">7/1/2015</div>
<div class="t" style="left:551.62px;width:65.32px;text-align:right;top:460.62px;font-size:8.70px;color:#262626;letter-spacing:-0.40px;-webkit-text-stroke:0.15px #262626">10471</div>
<div class="t" style="left:624.54px;top:460.62px;font-size:8.70px;color:#262626;letter-spacing:-0.40px;-webkit-text-stroke:0.15px #262626">Bossk</div>
<div class="t" style="left:690.26px;width:65.32px;text-align:right;top:460.62px;font-size:8.70px;color:#262626;letter-spacing:-0.40px;-webkit-text-stroke:0.15px #262626">13</div>
<div class="t" style="left:759.58px;width:65.32px;text-align:right;top:460.62px;font-size:8.70px;color:#262626;letter-spacing:-0.40px;-webkit-text-stroke:0.15px #262626">$859.75</div>
<div class="a" style="left:479.7px;top:248.3px;width:351.4px;height:20.1px;background:#ffff00;mix-blend-mode:multiply"></div>

<div class="t" style="left:319.60px;top:13.48px;font-size:7.20px;font-weight:normal;color:#8c8c8c;letter-spacing:-0.150px;font-family:'Liberation Sans';transform:scaleX(0.8525);transform-origin:0 0;">PAGE</div>
<div class="t" style="left:340.90px;top:12.41px;font-size:9.40px;font-weight:bold;color:#d2d2d2;letter-spacing:-0.093px;font-family:'Liberation Sans';">Design</div>
<div class="t" style="left:395.50px;top:13.48px;font-size:7.20px;font-weight:normal;color:#8c8c8c;letter-spacing:-0.150px;font-family:'Liberation Sans';transform:scaleX(0.8347);transform-origin:0 0;">REPOSITORY</div>
<div class="t" style="left:438.20px;top:12.61px;font-size:9.40px;font-weight:bold;color:#d2d2d2;letter-spacing:-0.150px;font-family:'Liberation Sans';transform:scaleX(0.9641);transform-origin:0 0;">OKCSTRKI03_02</div>
<div class="t" style="left:532.50px;top:13.48px;font-size:7.20px;font-weight:normal;color:#8c8c8c;letter-spacing:-0.150px;font-family:'Liberation Sans';transform:scaleX(0.8084);transform-origin:0 0;">LICENSEE</div>
<div class="t" style="left:565.70px;top:12.61px;font-size:9.40px;font-weight:bold;color:#d2d2d2;letter-spacing:-0.150px;font-family:'Liberation Sans';transform:scaleX(0.9256);transform-origin:0 0;">BIS</div>
<div class="t" style="left:36.10px;top:42.71px;font-size:9.40px;font-weight:normal;color:#c2c2c2;letter-spacing:-0.150px;font-family:'Liberation Sans';transform:scaleX(0.8380);transform-origin:0 0;-webkit-text-stroke:0.25px #c2c2c2">OKCSTRKI03_02</div>
<div class="t" style="left:45.80px;top:55.63px;font-size:9.40px;font-weight:normal;color:#c2c2c2;letter-spacing:-0.150px;font-family:'Liberation Sans';transform:scaleX(0.9189);transform-origin:0 0;-webkit-text-stroke:0.25px #c2c2c2">Batches</div>
<div class="t" style="left:45.80px;top:68.55px;font-size:9.40px;font-weight:normal;color:#c2c2c2;letter-spacing:-0.150px;font-family:'Liberation Sans';transform:scaleX(0.9322);transform-origin:0 0;-webkit-text-stroke:0.25px #c2c2c2">Projects</div>
<div class="t" style="left:55.20px;top:81.47px;font-size:9.40px;font-weight:normal;color:#c2c2c2;letter-spacing:-0.150px;font-family:'Liberation Sans';transform:scaleX(0.9061);transform-origin:0 0;-webkit-text-stroke:0.25px #c2c2c2">Essentials</div>
<div class="t" style="left:55.20px;top:94.39px;font-size:9.40px;font-weight:normal;color:#c2c2c2;letter-spacing:-0.150px;font-family:'Liberation Sans';transform:scaleX(0.9277);transform-origin:0 0;-webkit-text-stroke:0.25px #c2c2c2">Row Match - Project</div>
<div class="t" style="left:64.70px;top:107.31px;font-size:9.40px;font-weight:normal;color:#c2c2c2;letter-spacing:-0.150px;font-family:'Liberation Sans';transform:scaleX(0.9369);transform-origin:0 0;-webkit-text-stroke:0.25px #c2c2c2">Row Match - Content Model</div>
<div class="t" style="left:74.30px;top:120.23px;font-size:9.40px;font-weight:normal;color:#c2c2c2;letter-spacing:-0.150px;font-family:'Liberation Sans';transform:scaleX(0.8962);transform-origin:0 0;-webkit-text-stroke:0.25px #c2c2c2">Local Resources</div>
<div class="t" style="left:74.30px;top:133.15px;font-size:9.40px;font-weight:normal;color:#c2c2c2;letter-spacing:-0.150px;font-family:'Liberation Sans';transform:scaleX(0.9313);transform-origin:0 0;-webkit-text-stroke:0.25px #c2c2c2">Data Model</div>
<div class="t" style="left:83.40px;top:146.07px;font-size:9.40px;font-weight:normal;color:#e6e6e6;letter-spacing:-0.150px;font-family:'Liberation Sans';transform:scaleX(0.9296);transform-origin:0 0;-webkit-text-stroke:0.25px #e6e6e6">Table Example</div>
<div class="t" style="left:92.60px;top:158.99px;font-size:9.40px;font-weight:normal;color:#c2c2c2;letter-spacing:-0.150px;font-family:'Liberation Sans';transform:scaleX(0.9550);transform-origin:0 0;-webkit-text-stroke:0.25px #c2c2c2">Order Date</div>
<div class="t" style="left:92.60px;top:171.91px;font-size:9.40px;font-weight:normal;color:#c2c2c2;letter-spacing:-0.150px;font-family:'Liberation Sans';transform:scaleX(0.9483);transform-origin:0 0;-webkit-text-stroke:0.25px #c2c2c2">Order ID</div>
<div class="t" style="left:92.60px;top:184.83px;font-size:9.40px;font-weight:normal;color:#c2c2c2;letter-spacing:-0.150px;font-family:'Liberation Sans';transform:scaleX(0.9185);transform-origin:0 0;-webkit-text-stroke:0.25px #c2c2c2">Salesperson</div>
<div class="t" style="left:92.60px;top:197.75px;font-size:9.40px;font-weight:normal;color:#c2c2c2;letter-spacing:-0.150px;font-family:'Liberation Sans';transform:scaleX(0.9634);transform-origin:0 0;-webkit-text-stroke:0.25px #c2c2c2">Units</div>
<div class="t" style="left:92.60px;top:210.67px;font-size:9.40px;font-weight:normal;color:#c2c2c2;letter-spacing:-0.150px;font-family:'Liberation Sans';transform:scaleX(0.9784);transform-origin:0 0;-webkit-text-stroke:0.25px #c2c2c2">Order Amount</div>
<div class="t" style="left:46.00px;top:223.59px;font-size:9.40px;font-weight:normal;color:#c2c2c2;letter-spacing:-0.150px;font-family:'Liberation Sans';transform:scaleX(0.8854);transform-origin:0 0;-webkit-text-stroke:0.25px #c2c2c2">Processes</div>
<div class="t" style="left:46.00px;top:236.51px;font-size:9.40px;font-weight:normal;color:#c2c2c2;letter-spacing:-0.150px;font-family:'Liberation Sans';transform:scaleX(0.9130);transform-origin:0 0;-webkit-text-stroke:0.25px #c2c2c2">Queues</div>
<div class="t" style="left:46.00px;top:249.43px;font-size:9.40px;font-weight:normal;color:#c2c2c2;letter-spacing:-0.150px;font-family:'Liberation Sans';transform:scaleX(0.9027);transform-origin:0 0;-webkit-text-stroke:0.25px #c2c2c2">File Stores</div>
<div class="t" style="left:46.00px;top:262.35px;font-size:9.40px;font-weight:normal;color:#c2c2c2;letter-spacing:-0.150px;font-family:'Liberation Sans';transform:scaleX(0.9367);transform-origin:0 0;-webkit-text-stroke:0.25px #c2c2c2">Machines</div>
<div class="t" style="left:237.10px;top:39.64px;font-size:8.90px;font-weight:bold;color:#8a8a8a;letter-spacing:-0.093px;font-family:'Liberation Sans';">Data Table</div>
<div class="t" style="left:304.90px;top:39.64px;font-size:8.90px;font-weight:bold;color:#f2f2f2;letter-spacing:-0.097px;font-family:'Liberation Sans';">Tester</div>
<div class="t" style="left:355.00px;top:39.64px;font-size:8.90px;font-weight:bold;color:#6c6c6c;letter-spacing:-0.150px;font-family:'Liberation Sans';transform:scaleX(0.9644);transform-origin:0 0;">Advanced</div>
<div class="t" style="left:236.70px;top:59.65px;font-size:9.00px;font-weight:normal;color:#9c9c9c;letter-spacing:-0.150px;font-family:'Liberation Sans';transform:scaleX(0.8600);transform-origin:0 0;-webkit-text-stroke:0.2px #9c9c9c">TEST BATCH</div>
<div class="t" style="left:299.90px;top:93.01px;font-size:9.40px;font-weight:normal;color:#c4c4c4;letter-spacing:-0.150px;font-family:'Liberation Sans';transform:scaleX(0.9309);transform-origin:0 0;-webkit-text-stroke:0.2px #c4c4c4">Match Table Examples</div>
<div class="t" style="left:318.00px;top:137.09px;font-size:9.30px;font-weight:normal;color:#d4d4d4;letter-spacing:-0.150px;font-family:'Liberation Sans';transform:scaleX(0.9213);transform-origin:0 0;-webkit-text-stroke:0.2px #d4d4d4">Sales Report (1)</div>
<div class="t" style="left:434.70px;top:58.07px;font-size:9.80px;font-weight:bold;color:#cacaca;letter-spacing:0.042px;font-family:'Liberation Sans';">Preview</div>
<div class="t" style="left:434.70px;top:79.38px;font-size:11.20px;font-weight:bold;color:#cacaca;letter-spacing:-0.150px;font-family:'Liberation Sans';transform:scaleX(0.9470);transform-origin:0 0;">Table Example</div>
<div class="t" style="left:456.90px;top:95.69px;font-size:9.30px;font-weight:normal;color:#c2c2c2;letter-spacing:-0.150px;font-family:'Liberation Sans';transform:scaleX(0.9608);transform-origin:0 0;-webkit-text-stroke:0.2px #c2c2c2">Order Date</div>
<div class="t" style="left:524.40px;top:95.69px;font-size:9.30px;font-weight:normal;color:#c2c2c2;letter-spacing:-0.150px;font-family:'Liberation Sans';transform:scaleX(0.9391);transform-origin:0 0;-webkit-text-stroke:0.2px #c2c2c2">Order ID</div>
<div class="t" style="left:579.40px;top:95.69px;font-size:9.30px;font-weight:normal;color:#c2c2c2;letter-spacing:-0.150px;font-family:'Liberation Sans';transform:scaleX(0.9245);transform-origin:0 0;-webkit-text-stroke:0.2px #c2c2c2">Salesperson</div>
<div class="t" style="left:655.00px;top:95.69px;font-size:9.30px;font-weight:normal;color:#c2c2c2;letter-spacing:-0.150px;font-family:'Liberation Sans';transform:scaleX(0.9423);transform-origin:0 0;-webkit-text-stroke:0.2px #c2c2c2">Units</div>
<div class="t" style="left:698.90px;top:95.69px;font-size:9.30px;font-weight:normal;color:#c2c2c2;letter-spacing:-0.150px;font-family:'Liberation Sans';transform:scaleX(0.9818);transform-origin:0 0;-webkit-text-stroke:0.2px #c2c2c2">Order Amount</div>
<div class="t" style="left:193.40px;top:98.79px;font-size:10.60px;font-weight:bold;color:#ffffff;letter-spacing:0.016px;font-family:'Liberation Sans';z-index:20">The final Data Table</div>
<div class="t" style="left:195.20px;top:111.69px;font-size:10.60px;font-weight:bold;color:#ffffff;letter-spacing:-0.153px;font-family:'Liberation Sans';z-index:20">with the necessary</div>
<div class="t" style="left:193.40px;top:124.69px;font-size:10.60px;font-weight:bold;color:#ffffff;letter-spacing:-0.111px;font-family:'Liberation Sans';z-index:20">Data Columns…</div>
<div class="t" style="left:552.00px;top:174.82px;font-size:10.80px;font-weight:bold;color:#ffffff;letter-spacing:-0.174px;font-family:'Liberation Sans';z-index:20">… one for each column on the document</div>

<!-- help ? -->
<div class="t" style="left:878.6px;top:11.5px;font-size:10.5px;font-weight:bold;color:#1c1c1c">?</div>

<!-- callout 1 -->
<svg style="left:0;top:0;z-index:10" width="900" height="507" viewBox="0 0 900 507">
 <path d="M180.5 125.3 L151 155.5" stroke="#f6931f" stroke-width="2"/>
 <path d="M145 160.6 L150.2 148.4 L158.9 153.5 Z" fill="#f6931f"/>
 <rect x="186.8" y="94.3" width="112.2" height="48.4" fill="#f6931f"/>
 <circle cx="185.7" cy="118.2" r="8.6" fill="#f6931f"/>
 <rect x="548" y="169.5" width="216" height="22.5" fill="#0a0a0a" opacity="0.85"/>
 <rect x="548.7" y="170" width="213.8" height="20.5" fill="#f6931f"/>
 <path d="M657.3 201 L657.3 241" stroke="#8090a8" stroke-width="1.4" opacity="0.45"/>
 <path d="M653 239.8 L662.3 239.8 L657.3 253.5 Z" fill="#8090a8" opacity="0.35"/>
 <circle cx="656.9" cy="195.9" r="8.8" fill="#8090a8" opacity="0.4"/>
 <path d="M655.8 200 L655.8 240" stroke="#f6931f" stroke-width="2.4"/>
 <path d="M651.3 238.6 L660.8 238.6 L655.8 252.8 Z" fill="#f6931f"/>
 <circle cx="655.75" cy="194.7" r="8.8" fill="#f6931f"/>
</svg>
<svg style="left:0;top:0;z-index:20" width="900" height="507" viewBox="0 0 900 507"><path d="M186.1 114.9 L187.9 114.9 L187.9 122.3 L186.2 122.3 L186.2 117.1 L184.1 117.8 L184.1 116.3 Z" fill="#fff"/></svg>
<div class="t" style="left:652.2px;top:190.2px;font-size:10.8px;font-weight:bold;color:#fff;z-index:20">2</div>
</body></html>
